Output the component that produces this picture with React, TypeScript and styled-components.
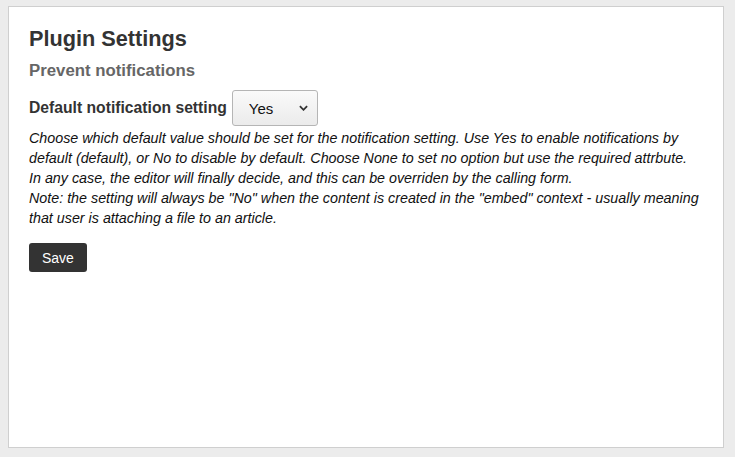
import React, { useState } from "react";
import styled, { createGlobalStyle } from "styled-components";

const GlobalStyle = createGlobalStyle`
    html, body {
        margin: 0;
        padding: 0;
        background: #ececec;
        font-family: "Liberation Sans", Arial, sans-serif;
        color: #333;
    }
`;

export default function App() {
    const [value, setValue] = useState("Yes");

    return (
        <>
            <GlobalStyle />
            <Page>
                <Panel>
                    <Title>Plugin Settings</Title>
                    <SubTitle>Prevent notifications</SubTitle>
                    <FieldRow>
                        <Label>Default notification setting</Label>
                        <SelectBox>
                            <Select value={value} onChange={(e) => setValue(e.target.value)}>
                                <option>Yes</option>
                                <option>No</option>
                                <option>None</option>
                            </Select>
                            <Chevron viewBox="0 0 10 6" aria-hidden>
                                <path d="M1 1l4 4 4-4" />
                            </Chevron>
                        </SelectBox>
                    </FieldRow>
                    <Description>
                        Choose which default value should be set for the notification setting. Use Yes
                        to enable notifications by default (default), or No to disable by default.
                        Choose None to set no option but use the required attrbute.
                        <br />
                        In any case, the editor will finally decide, and this can be overriden by the
                        calling form.
                        <br />
                        Note: the setting will always be "No" when the content is created in the
                        "embed" context - usually meaning that user is attaching a file to an article.
                    </Description>
                    <SaveButton>Save</SaveButton>
                </Panel>
            </Page>
        </>
    );
}

const Page = styled.div`
    padding: 6px 12px 10px 8px;
`;

const Panel = styled.div`
    box-sizing: border-box;
    width: 716px;
    height: 442px;
    background: #fff;
    border: 1px solid #cfcfcf;
    padding: 19px 20px;
`;

const Title = styled.h1`
    margin: 0;
    font-size: 21.7px;
    line-height: 26px;
    font-weight: bold;
    color: #333;
`;

const SubTitle = styled.h2`
    margin: 8px 0 0;
    font-size: 16.8px;
    line-height: 22px;
    font-weight: bold;
    color: #666;
`;

const FieldRow = styled.div`
    display: flex;
    align-items: center;
    gap: 5px;
    margin-top: 8px;
`;

const Label = styled.label`
    font-size: 15.7px;
    font-weight: bold;
    color: #333;
`;

const SelectBox = styled.div`
    position: relative;
    width: 86px;
    height: 36px;
`;

const Select = styled.select`
    appearance: none;
    box-sizing: border-box;
    width: 100%;
    height: 100%;
    border: 1px solid #b5b5b5;
    border-radius: 3px;
    background: linear-gradient(#fafafa, #ebebeb);
    font-family: "Liberation Sans", Arial, sans-serif;
    font-size: 15px;
    color: #111;
    padding: 0 0 0 16px;
    outline: none;
`;

const Chevron = styled.svg`
    position: absolute;
    right: 10px;
    top: 15px;
    width: 9px;
    height: 6px;
    fill: none;
    stroke: #333;
    stroke-width: 2;
    pointer-events: none;
`;

const Description = styled.p`
    margin: 2px 0 0;
    font-size: 14.3px;
    line-height: 20px;
    font-style: italic;
    color: #111;
`;

const SaveButton = styled.button`
    margin-top: 15px;
    height: 29px;
    padding: 0 13px;
    border: none;
    border-radius: 3px;
    background: #333;
    color: #fff;
    font-family: "Liberation Sans", Arial, sans-serif;
    font-size: 14px;
`;
